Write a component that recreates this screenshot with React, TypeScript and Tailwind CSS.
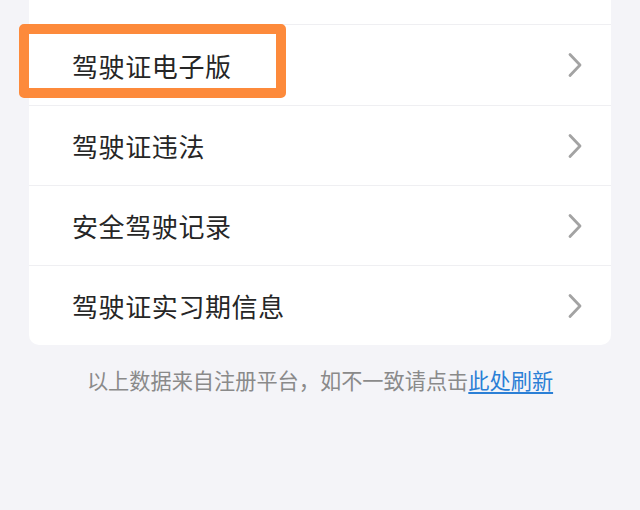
import React from "react";

const Chevron = () => (
  <svg width="16" height="26" viewBox="0 0 16 26" fill="none">
    <path d="M3 2.5 L13 13 L3 23.5" stroke="#a3a3a3" strokeWidth="2.8" strokeLinecap="round" strokeLinejoin="round" />
  </svg>
);

const Row = ({ label, first, highlight }: { label: string; first?: boolean; highlight?: boolean }) => (
  <div className={`relative flex items-center justify-between h-[80px] pl-[43px] pr-[28px] ${first ? "" : "border-t border-[#efeff2]"}`}>
    <span className="text-[26px] text-[#262626] tracking-[0.6px]">{label}</span>
    <Chevron />
    {highlight && (
      <div className="absolute left-[-10px] top-[-1px] w-[267px] h-[74px] border-[10px] border-[#fd8a3b] rounded-[5px]" />
    )}
  </div>
);

export default function App() {
  return (
    <div
      className="w-[640px] h-[510px] bg-[#f4f4f8] overflow-hidden"
      style={{ fontFamily: '"Noto Sans CJK SC", "Noto Sans", sans-serif' }}
    >
      <div className="mx-[29px] bg-white rounded-b-[10px]">
        <div className="h-[24px]" />
        <div className="border-t border-[#efeff2]">
          <Row label="驾驶证电子版" first highlight />
        </div>
        <Row label="驾驶证违法" />
        <Row label="安全驾驶记录" />
        <Row label="驾驶证实习期信息" />
      </div>
      <div className="mt-[21px] text-center text-[21.2px] leading-[28px] text-[#8a8a8a]">
        以上数据来自注册平台，如不一致请点击
        <span className="text-[#2b7fd6] underline underline-offset-[3px]">此处刷新</span>
      </div>
    </div>
  );
}
